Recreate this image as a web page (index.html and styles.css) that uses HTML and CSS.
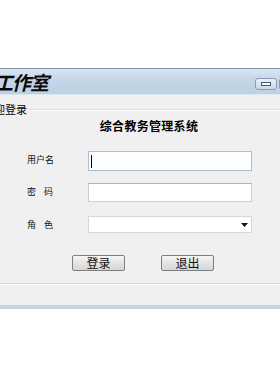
FILE: index.html
```html
<!DOCTYPE html>
<html lang="zh-CN">

<head>
    <meta charset="UTF-8">
    <title>综合教务管理系统</title>
    <link rel="stylesheet" href="styles.css">
</head>

<body>

    <div class="desktop"></div>

    <div class="window">
        <div class="titlebar">
            <span class="logo">工作室</span>
            <div class="caption-buttons">
                <span class="cap-btn min"><i></i></span>
                <span class="cap-btn next"></span>
            </div>
        </div>

        <div class="client">
            <div class="group">
                <div class="legend-row">
                    <span class="legend">欢迎登录</span>
                    <span class="etched"></span>
                </div>

                <h1 class="title">综合教务管理系统</h1>

                <div class="form">
                    <label class="label">用户名</label>
                    <div class="field first"><span class="caret"></span></div>

                    <label class="label">密<span class="gap"></span>码</label>
                    <div class="field second"></div>

                    <label class="label">角<span class="gap"></span>色</label>
                    <div class="field combo">
                        <svg width="7" height="4" viewBox="0 0 7 4"><path d="M0 0h7L3.5 4z" fill="#111"/></svg>
                    </div>
                </div>

                <div class="buttons">
                    <button class="btn">登录</button>
                    <button class="btn">退出</button>
                </div>
            </div>
            <div class="etched-bottom"></div>
        </div>

        <div class="frame-bottom"></div>
    </div>

</body>

</html>
```

FILE: styles.css
```css
body {
    margin: 0;
    background: #fff;
    font-family: "Noto Sans CJK SC", "DejaVu Sans", sans-serif;
    color: #000;
    overflow: hidden;
}

.desktop {
    height: 68px;
    background: #fff;
}

.window {
    border-top: 1px solid #8396ad;
    overflow: hidden;
}

.titlebar {
    height: 25px;
    background: linear-gradient(#d9e5f2, #c4d5e7 45%, #bed0e4);
    display: flex;
    justify-content: space-between;
    align-items: center;
    border-bottom: 1px solid #dfe6ee;
    overflow: hidden;
}

.logo {
    margin-left: -6px;
    font-size: 19px;
    font-weight: bold;
    font-style: italic;
    line-height: 24px;
    letter-spacing: -1px;
    color: #0a0a0a;
}

.caption-buttons {
    display: flex;
    gap: 2px;
    margin-right: -21px;
    margin-top: 5px;
}

.cap-btn {
    width: 20px;
    height: 10px;
    border: 1px solid #8a9cb3;
    border-radius: 3px;
    background: linear-gradient(#e9f0f8, #c9d8e8);
    display: flex;
    justify-content: center;
    align-items: center;
}

.cap-btn i {
    width: 8px;
    height: 2px;
    background: #fff;
    border: 1px solid #46556a;
}

.client {
    background: #f0f0f0;
    padding-top: 7px;
    height: 203px;
    overflow: hidden;
}

.legend-row {
    display: flex;
    align-items: center;
    height: 14px;
}

.legend {
    margin-left: -17px;
    font-size: 11px;
    line-height: 14px;
    padding-right: 2px;
}

.etched {
    flex: 1;
    border-top: 1px solid #d5dfe5;
    border-bottom: 1px solid #fff;
    margin-top: 1px;
}

.title {
    margin: 2px 0 0 18px;
    text-align: center;
    font-size: 12px;
    letter-spacing: 0.3px;
    line-height: 15px;
    font-weight: bold;
}

.form {
    display: grid;
    grid-template-columns: 88px 164px;
    grid-template-rows: 32px 33px 17px;
    margin-top: 18px;
    align-items: start;
}

.label {
    padding-left: 27px;
    font-size: 9px;
    line-height: 12px;
    color: #111;
    margin-top: 3px;
}

.gap {
    display: inline-block;
    width: 8px;
}

.field {
    box-sizing: border-box;
    background: #fff;
    border: 1px solid #c9cfd6;
    border-top-color: #abb3bc;
    display: flex;
    align-items: center;
}

.field.first {
    height: 20px;
    background: #fbfdff;
    border-color: #a8bfd6;
}

.field.second {
    height: 19px;
}

.caret {
    width: 1px;
    height: 13px;
    margin-left: 2px;
    background: #000;
}

.combo {
    height: 17px;
    justify-content: flex-end;
    padding-right: 3px;
    border-color: #d4d8dc;
}

.buttons {
    display: flex;
    gap: 36px;
    margin: 22px 0 0 72px;
}

.btn {
    width: 53px;
    height: 16px;
    padding: 0;
    font-family: inherit;
    font-size: 12px;
    line-height: 14px;
    color: #111;
    border: 1px solid #7f7f7f;
    border-radius: 2px;
    background: linear-gradient(#f6f6f6, #e4e4e4 50%, #d6d6d6);
}

.etched-bottom {
    margin-top: 12px;
    border-top: 1px solid #d8d8d8;
    border-bottom: 1px solid #fff;
}

.frame-bottom {
    height: 4px;
    background: #c3d5e7;
}
```
